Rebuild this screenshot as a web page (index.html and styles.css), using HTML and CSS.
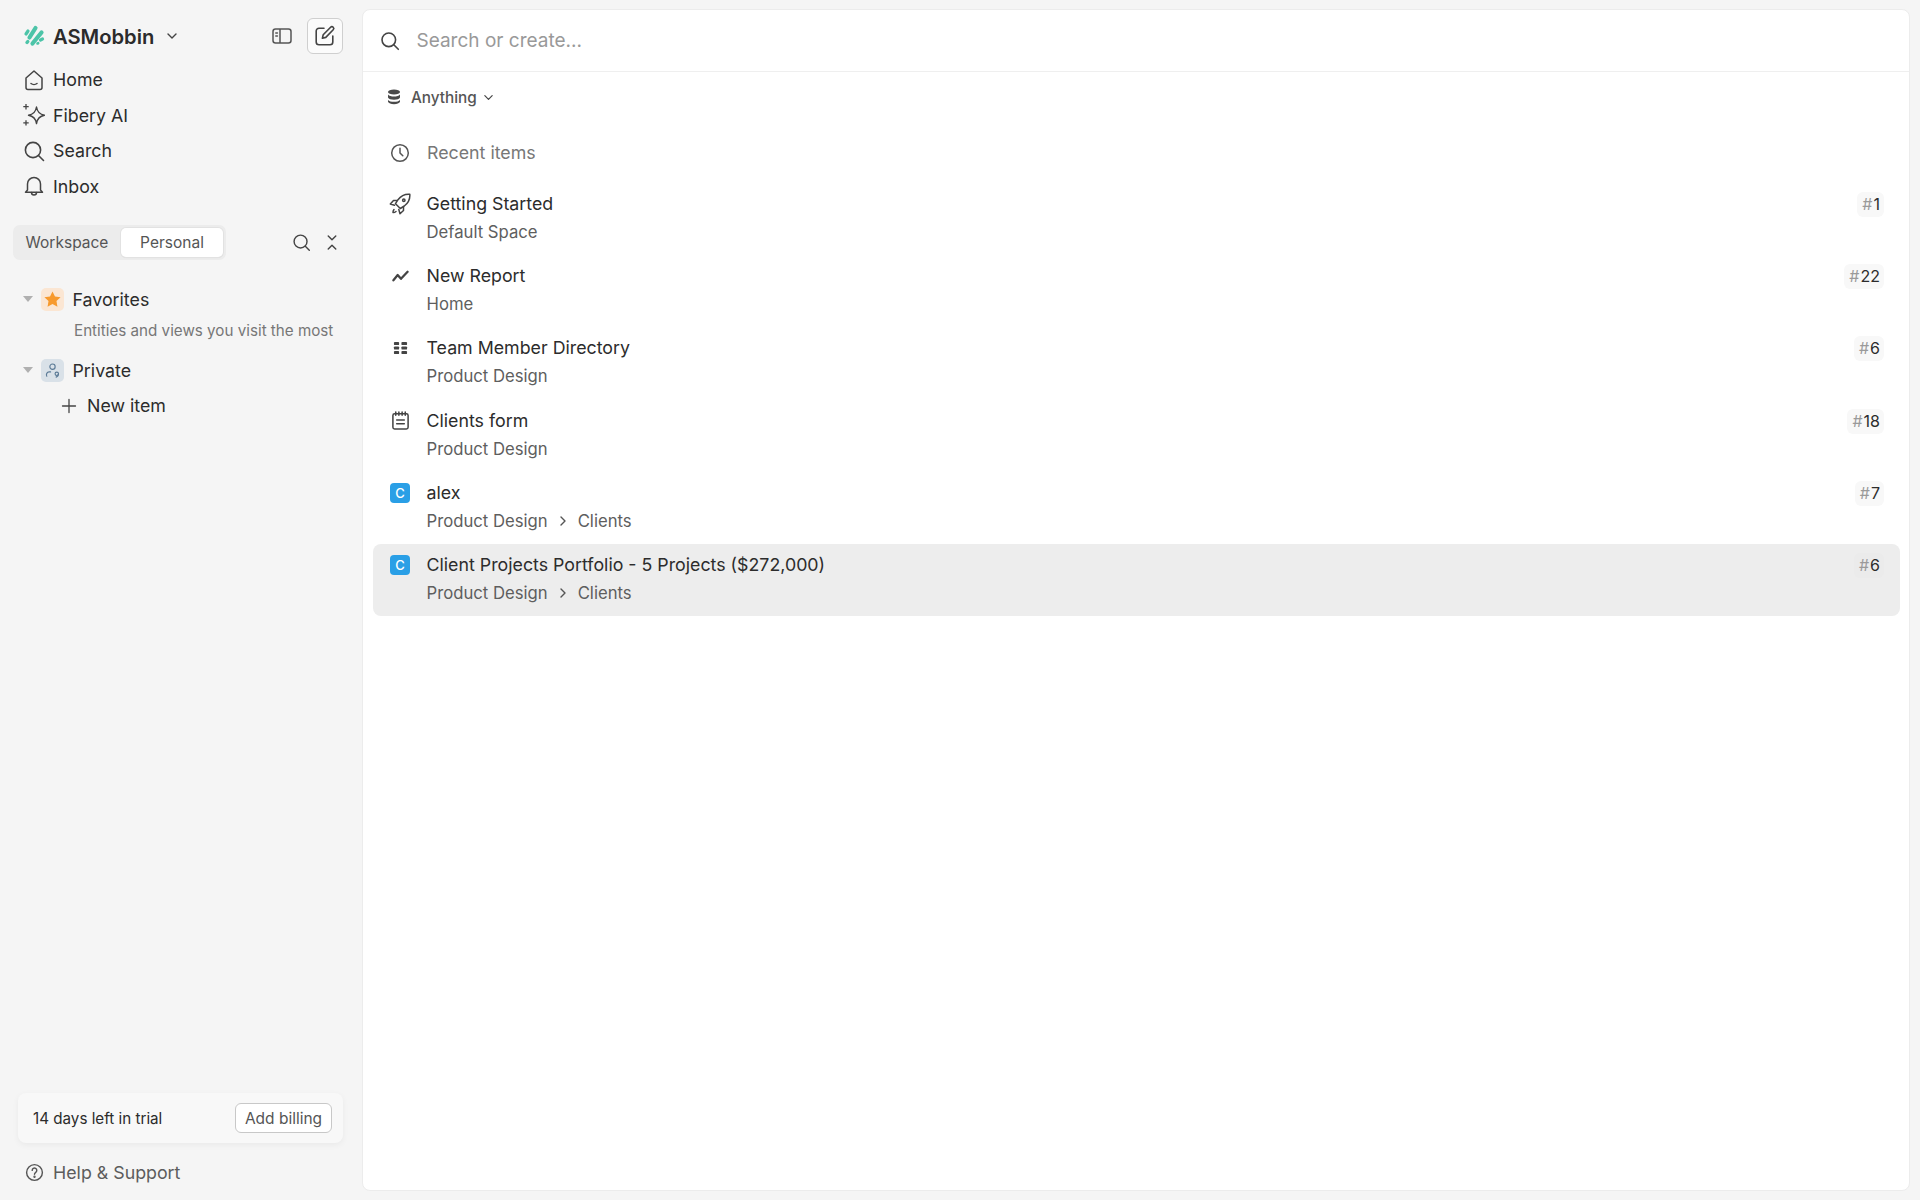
FILE: index.html
```html
<!DOCTYPE html>
<html lang="en">
<head>
<meta charset="utf-8">
<title>ASMobbin</title>
<link rel="stylesheet" href="styles.css">
</head>
<body>
<div class="app">
  <aside class="sidebar">
    <div class="brand-row">
      <svg class="logo" viewBox="0 0 22 22" fill="none" stroke="#4cc4a8" stroke-linecap="round"><path d="M6.500 12.500 12.500 3" stroke-width="4.200"/><path d="M9.500 18.500 18.500 7.500" stroke-width="4.200"/><path d="M3 9 5 6" stroke-width="3.200"/><path d="M4 17.500 4.800 16.500" stroke-width="3.400"/><path d="M17.500 15 19.500 14" stroke-width="3.200"/><path d="M14.500 18.500 15.200 18.200" stroke-width="2.600"/></svg>
      <span class="brand">ASMobbin</span>
      <svg class="chev" viewBox="0 0 12 12" fill="none" stroke="#444" stroke-width="1.400" stroke-linecap="round" stroke-linejoin="round"><path d="M2 4l4 4 4-4"/></svg>
      <svg class="panel-ico" viewBox="0 0 20 18" fill="none" stroke="#555" stroke-width="1.500"><rect x="1" y="2" width="18" height="14" rx="2.500"/><path d="M8 2v14"/><path d="M3.800 6h1.600M3.800 9h1.600" stroke-linecap="round"/></svg>
      <button class="compose"><svg viewBox="0 0 22 22" fill="none" stroke="#444" stroke-width="1.600" stroke-linecap="round" stroke-linejoin="round"><path d="M10 3.200H5a2.800 2.800 0 0 0-2.800 2.800v11a2.800 2.800 0 0 0 2.800 2.800h11a2.800 2.800 0 0 0 2.800-2.800v-6"/><path d="M16.600 2.200a1.800 1.800 0 0 1 2.600 2.600l-7.400 7.600-3.400.8.800-3.400z"/></svg></button>
    </div>
    <nav class="nav">
      <a class="nav-item"><svg viewBox="0 0 22 22" fill="none" stroke="#444" stroke-width="1.500" stroke-linecap="round" stroke-linejoin="round"><path d="M3 9 11 2l8 7v9.500a2 2 0 0 1-2 2H5a2 2 0 0 1-2-2z"/><path d="M8 14.500c1.600 1.300 4.400 1.300 6 0"/></svg>Home</a>
      <a class="nav-item"><svg viewBox="0 0 22 22" fill="none" stroke="#444" stroke-width="1.400" stroke-linejoin="round"><path d="M13.500 3c.8 5.200 3.200 7.500 8 8.300-4.800.8-7.200 3.100-8 8.300-.8-5.200-3.200-7.500-8-8.300 4.800-.8 7.200-3.100 8-8.300z"/><path d="M3 0v5.400M.3 2.700h5.400M3 16.200v5.400M.3 18.900h5.400" stroke-width="1.300"/></svg>Fibery AI</a>
      <a class="nav-item"><svg viewBox="0 0 22 22" fill="none" stroke="#444" stroke-width="1.600" stroke-linecap="round"><circle cx="10" cy="10" r="7.600"/><path d="m15.500 15.500 5 5"/></svg>Search</a>
      <a class="nav-item"><svg viewBox="0 0 22 22" fill="none" stroke="#444" stroke-width="1.500" stroke-linecap="round" stroke-linejoin="round"><path d="M4.500 15V9a6.500 6.500 0 0 1 13 0v6l2 2.200H2.500z"/><path d="M8.500 17.500a2.500 2.500 0 0 0 5 0"/></svg>Inbox</a>
    </nav>
    <div class="tabs-row">
      <div class="tabs">
        <span class="tab">Workspace</span>
        <span class="tab tab-on">Personal</span>
      </div>
      <svg class="tool search-tool" viewBox="0 0 20 20" fill="none" stroke="#444" stroke-width="1.500" stroke-linecap="round"><circle cx="9" cy="9" r="6.800"/><path d="m14 14 4.200 4.200"/></svg>
      <svg class="tool collapse-tool" viewBox="0 0 12 18" fill="none" stroke="#444" stroke-width="1.500" stroke-linecap="round" stroke-linejoin="round"><path d="M2 2l4 4 4-4M2 16l4-4 4 4"/></svg>
    </div>
    <div class="tree">
      <div class="tree-item">
        <span class="caret"></span>
        <span class="space-ico fav"><svg viewBox="0 0 20 20"><path fill="#f79a2e" d="M10 1.500l2.600 5.300 5.900.8-4.300 4.100 1 5.800-5.200-2.800-5.200 2.800 1-5.800-4.300-4.100 5.900-.8z"/></svg></span>
        <span>Favorites</span>
      </div>
      <div class="tree-note">Entities and views you visit the most</div>
      <div class="tree-item">
        <span class="caret"></span>
        <span class="space-ico priv"><svg viewBox="0 0 20 20" fill="none" stroke="#5b7a96" stroke-width="1.200" stroke-linecap="round"><circle cx="10" cy="6" r="2.800"/><path d="M8 11.500H6.500a3 3 0 0 0-2.500 4.500"/><circle cx="14.500" cy="13.500" r="1.800"/><path d="M16.300 13.500c0 2-1 3-2.500 3.500"/></svg></span>
        <span>Private</span>
      </div>
      <div class="tree-new">
        <svg viewBox="0 0 16 16" fill="none" stroke="#444" stroke-width="1.300" stroke-linecap="round"><path d="M8 1.500v13M1.500 8h13"/></svg>
        <span>New item</span>
      </div>
    </div>
    <div class="trial">
      <span class="trial-text">14 days left in trial</span>
      <button class="billing">Add billing</button>
    </div>
    <a class="help"><svg viewBox="0 0 20 20" fill="none" stroke="#555" stroke-width="1.500" stroke-linecap="round"><circle cx="10" cy="10" r="8.300"/><path d="M7.600 7.800a2.400 2.400 0 1 1 3.700 2c-.9.600-1.300 1-1.300 2"/><circle cx="10" cy="14.500" r=".5" fill="#555"/></svg>Help &amp; Support</a>
  </aside>
  <main class="panel">
    <header class="search-bar">
      <svg viewBox="0 0 20 20" fill="none" stroke="#444" stroke-width="1.600" stroke-linecap="round"><circle cx="8.800" cy="8.800" r="6.800"/><path d="m13.800 13.800 4.500 4.500"/></svg>
      <span class="placeholder">Search or create...</span>
    </header>
    <div class="filter">
      <svg class="db" viewBox="0 0 14 16" fill="#4a4a4a"><ellipse cx="7" cy="3" rx="6" ry="2.600"/><path d="M1 5.500c1 1.500 3.500 2 6 2s5-.5 6-2v3c-.6 1.500-3 2.200-6 2.200S1.600 10 1 8.500z"/><path d="M1 11c1 1.300 3.500 1.800 6 1.800s5-.5 6-1.800v1.800c-.6 1.500-3 2.400-6 2.400s-5.400-.9-6-2.400z"/></svg>
      <span>Anything</span>
      <svg class="filter-chev" viewBox="0 0 12 12" fill="none" stroke="#444" stroke-width="1.300" stroke-linecap="round" stroke-linejoin="round"><path d="M2 4l4 4 4-4"/></svg>
    </div>
    <div class="recent">
      <svg viewBox="0 0 20 20" fill="none" stroke="#555" stroke-width="1.500" stroke-linecap="round" stroke-linejoin="round"><circle cx="10" cy="10" r="8.300"/><path d="M10 5.200V10l2.800 2.800"/></svg>
      <span>Recent items</span>
    </div>
    <ul class="list">
      <li class="row">
        <span class="row-ico"><svg viewBox="0 0 22 22" fill="none" stroke="#444" stroke-width="1.500" stroke-linecap="round" stroke-linejoin="round"><path d="M20.800 1.200c-4.800-.4-8.800 1.500-11.800 5.500l-2.500 4 4.800 4.800 4-2.500c4-3 5.900-7 5.500-11.800z"/><path d="M7.800 7.500H4.500L1.300 11l4.200 1.200M14.500 14.200v3.300L11 20.700l-1.200-4.200"/><path d="M5 16.500c-.8 1-1.100 2-1 3 1 .1 2-.2 3-1"/><circle cx="14.800" cy="7.200" r="1.200"/></svg></span>
        <div class="row-text"><div class="title">Getting Started</div><div class="sub">Default Space</div></div>
        <span class="badge"><i>#</i>1</span>
      </li>
      <li class="row">
        <span class="row-ico"><svg viewBox="0 0 18 12" fill="none" stroke="#444" stroke-width="2.400" stroke-linejoin="round" stroke-linecap="round"><path d="M1.500 10.500 6 5l3.500 4 7-7.500"/></svg></span>
        <div class="row-text"><div class="title">New Report</div><div class="sub">Home</div></div>
        <span class="badge"><i>#</i>22</span>
      </li>
      <li class="row">
        <span class="row-ico"><svg viewBox="0 0 16 14" fill="#444"><rect x="1" y="0.500" width="5.500" height="3.400" rx="1"/><rect x="9" y="0.500" width="6" height="3.400" rx="1"/><rect x="1" y="5.300" width="5.500" height="3.400" rx="1"/><rect x="9" y="5.300" width="6" height="3.400" rx="1"/><rect x="1" y="10.100" width="5.500" height="3.400" rx="1"/><rect x="9" y="10.100" width="6" height="3.400" rx="1"/></svg></span>
        <div class="row-text"><div class="title">Team Member Directory</div><div class="sub">Product Design</div></div>
        <span class="badge"><i>#</i>6</span>
      </li>
      <li class="row">
        <span class="row-ico"><svg viewBox="0 0 20 20" fill="none" stroke="#444" stroke-width="1.600" stroke-linecap="round" stroke-linejoin="round"><rect x="2" y="3" width="16" height="16" rx="1.800"/><path d="M5 1v3.500M8.300 1v3.500M11.700 1v3.500M15 1v3.500M6 9.500h8M6 13.500h8"/></svg></span>
        <div class="row-text"><div class="title">Clients form</div><div class="sub">Product Design</div></div>
        <span class="badge"><i>#</i>18</span>
      </li>
      <li class="row">
        <span class="row-ico"><span class="c-ico">C</span></span>
        <div class="row-text"><div class="title">alex</div><div class="sub">Product Design<svg class="crumb" viewBox="0 0 12 12" fill="none" stroke="#555" stroke-width="1.400" stroke-linecap="round" stroke-linejoin="round"><path d="M4 2l4 4-4 4"/></svg>Clients</div></div>
        <span class="badge"><i>#</i>7</span>
      </li>
      <li class="row row-on">
        <span class="row-ico"><span class="c-ico">C</span></span>
        <div class="row-text"><div class="title">Client Projects Portfolio - 5 Projects ($272,000)</div><div class="sub">Product Design<svg class="crumb" viewBox="0 0 12 12" fill="none" stroke="#555" stroke-width="1.400" stroke-linecap="round" stroke-linejoin="round"><path d="M4 2l4 4-4 4"/></svg>Clients</div></div>
        <span class="badge"><i>#</i>6</span>
      </li>
    </ul>
  </main>
</div>
</body>
</html>
```
FILE: styles.css
```css
* { box-sizing: border-box; }
html, body { margin: 0; height: 100%; }
body {
  font-family: Inter, "Liberation Sans", sans-serif;
  background: #f5f5f5;
  color: #2c2c2c;
  font-size: 17.800px;
}
.app { display: flex; height: 1200px; }

/* Sidebar */
.sidebar {
  width: 362px;
  flex: none;
  display: flex;
  flex-direction: column;
  padding: 18px 0 0 0;
}
.brand-row {
  display: flex;
  align-items: center;
  height: 36px;
  padding-left: 23px;
}
.logo { width: 22px; height: 22px; flex: none; }
.brand { font-weight: 600; font-size: 20.200px; margin-left: 8px; color: #2b2b2b; }
.chev { width: 12px; height: 12px; margin-left: 12px; }
.panel-ico { width: 20px; height: 18px; margin-left: auto; }
.compose {
  width: 36px;
  height: 36px;
  margin: 0 19px 0 15px;
  padding: 0;
  display: flex;
  align-items: center;
  justify-content: center;
  background: #fbfbfb;
  border: 1px solid #cfcfcf;
  border-radius: 6px;
}
.compose svg { width: 22px; height: 22px; }
.nav { display: flex; flex-direction: column; margin-top: 8px; }
.nav-item {
  display: flex;
  align-items: center;
  gap: 8px;
  height: 35.500px;
  padding-left: 23px;
}
.nav-item svg { width: 22px; height: 22px; flex: none; }
.tabs-row {
  display: flex;
  align-items: center;
  margin: 21px 0 0 13px;
  height: 35px;
}
.tabs {
  display: flex;
  align-items: center;
  width: 213px;
  height: 35px;
  background: #ececec;
  border-radius: 7px;
  padding: 0 3px 0 0;
  font-size: 15.500px;
  color: #555;
}
.tab { flex: none; width: 108px; text-align: center; }
.tab-on {
  width: 102px;
  height: 29px;
  line-height: 29px;
  background: #fff;
  border-radius: 5px;
  box-shadow: 0 0 0 1px #e2e2e2, 0 1px 1px rgba(0,0,0,.08);
}
.tool { flex: none; }
.search-tool { width: 19px; height: 19px; margin-left: 66px; }
.collapse-tool { width: 12px; height: 17px; margin-left: 15px; }
.tree { margin-top: 21px; }
.tree-item {
  display: flex;
  align-items: center;
  height: 36px;
  padding-left: 23px;
}
.caret {
  width: 0;
  height: 0;
  margin-right: 8px;
  border-left: 5px solid transparent;
  border-right: 5px solid transparent;
  border-top: 6px solid #b0b0b0;
}
.space-ico {
  width: 23px;
  height: 23px;
  margin-right: 8.500px;
  border-radius: 5px;
  display: flex;
  align-items: center;
  justify-content: center;
}
.space-ico svg { width: 19px; height: 19px; }
.fav { background: #fbe6d3; }
.priv { background: #d9e1e8; }
.tree-note {
  height: 35px;
  padding: 2px 0 0 74px;
  font-size: 15.200px;
  line-height: 24px;
  color: #777;
  white-space: nowrap;
}
.tree-new {
  display: flex;
  align-items: center;
  gap: 10px;
  height: 35px;
  padding-left: 61px;
}
.tree-new svg { width: 16px; height: 16px; }
.trial {
  display: flex;
  align-items: center;
  justify-content: space-between;
  margin: auto 19px 0 18px;
  height: 50px;
  padding: 0 11px 0 15px;
  background: #f8f8f8;
  border-radius: 8px;
  box-shadow: 0 2px 6px rgba(0,0,0,.05);
}
.trial-text { font-size: 15.200px; color: #2c2c2c; }
.billing {
  width: 97px;
  height: 30px;
  padding: 0;
  font: inherit;
  font-size: 15.500px;
  color: #555;
  background: #fff;
  border: 1px solid #c8c8c8;
  border-radius: 6px;
}
.help {
  display: flex;
  align-items: center;
  gap: 9px;
  height: 36px;
  margin: 11px 0 10px;
  padding-left: 25px;
  color: #5c5c5c;
}
.help svg { width: 19px; height: 19px; }

/* Main panel */
.panel {
  width: 1548px;
  margin: 9px 10px 9px 0;
  background: #fff;
  border: 1px solid #ececec;
  border-radius: 8px;
  flex: none;
}
.search-bar {
  display: flex;
  align-items: center;
  height: 62px;
  padding-left: 17px;
  border-bottom: 1px solid #efefef;
}
.search-bar svg { width: 20px; height: 20px; flex: none; }
.placeholder { margin-left: 16.500px; font-size: 19px; color: #999; }
.filter {
  display: flex;
  align-items: center;
  height: 50px;
  padding-left: 24px;
  font-size: 15.300px;
  font-weight: 500;
  color: #555;
}
.db { width: 14px; height: 16px; margin-right: 10px; }
.filter-chev { width: 11px; height: 11px; margin-left: 6px; }
.recent {
  display: flex;
  align-items: center;
  gap: 17px;
  height: 36px;
  margin-top: 12.500px;
  padding-left: 27px;
  color: #777;
}
.recent svg { width: 20px; height: 20px; flex: none; }
.list {
  list-style: none;
  margin: 12.200px 9px 0 10px;
  padding: 0;
}
.row {
  display: flex;
  align-items: flex-start;
  height: 72.300px;
  padding: 9px 16px 0 16px;
  border-radius: 8px;
}
.row-on { background: #ededed; }
.row-ico {
  width: 22px;
  height: 24px;
  margin-right: 15.500px;
  flex: none;
  display: flex;
  align-items: center;
  justify-content: center;
}
.row-ico svg { width: 22px; height: 22px; }
.row:nth-child(2) .row-ico svg { width: 17px; height: 12px; }
.row:nth-child(3) .row-ico svg { width: 15px; height: 14px; }
.row:nth-child(4) .row-ico svg { width: 19px; height: 19px; }
.c-ico {
  width: 20px;
  height: 20px;
  border-radius: 4px;
  background: #2a9fe6;
  color: #fff;
  font-size: 13px;
  font-weight: 500;
  line-height: 20px;
  text-align: center;
}
.row-text { flex: 1; min-width: 0; }
.title { height: 24px; line-height: 24px; color: #2c2c2c; }
.sub {
  display: flex;
  align-items: center;
  height: 24px;
  margin-top: 4px;
  font-size: 16.700px;
  color: #5e5e5e;
}
.crumb { width: 12px; height: 12px; margin: 0 9px; flex: none; }
.badge {
  height: 25px;
  line-height: 25px;
  padding: 0 4px 0 5px;
  font-size: 16px;
  background: #f8f8f8;
  border-radius: 6px;
  color: #2c2c2c;
}
.badge i { font-style: normal; color: #9a9a9a; margin-right: 1px; }
.row-on .badge { background: #ebebeb; }
```
